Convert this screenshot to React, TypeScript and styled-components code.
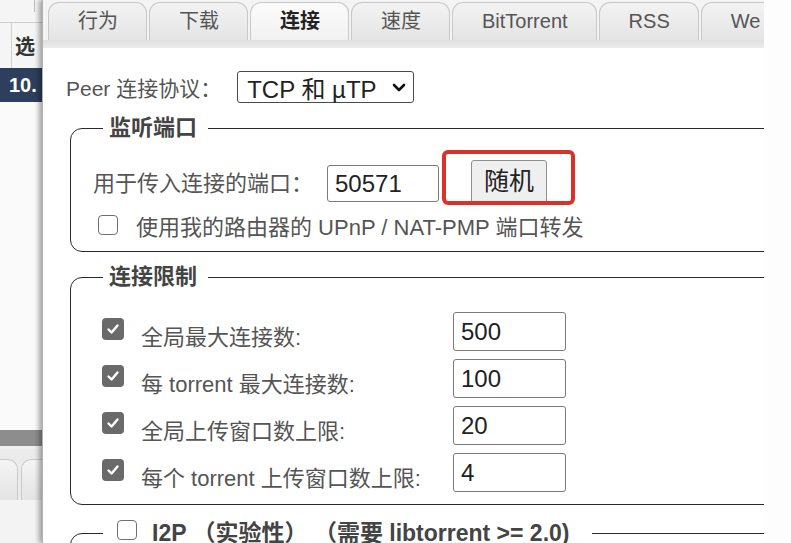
import React from 'react';
import styled, { createGlobalStyle } from 'styled-components';

const GlobalStyle = createGlobalStyle`
  html, body {
    margin: 0;
    padding: 0;
    background: #fdfdfd;
  }
  body {
    font-family: "Liberation Sans", "Noto Sans CJK SC", sans-serif;
  }
`;

const tabs = [
    { id: 'behavior', label: '行为' },
    { id: 'downloads', label: '下载' },
    { id: 'connection', label: '连接', active: true },
    { id: 'speed', label: '速度' },
    { id: 'bittorrent', label: 'BitTorrent' },
    { id: 'rss', label: 'RSS' },
    { id: 'webui', label: 'We' },
];

const limits = [
    { id: 1, label: '全局最大连接数:', value: '500' },
    { id: 2, label: '每 torrent 最大连接数:', value: '100' },
    { id: 3, label: '全局上传窗口数上限:', value: '20' },
    { id: 4, label: '每个 torrent 上传窗口数上限:', value: '4' },
];

const CheckMark = () => (
    <svg width="14" height="14" viewBox="0 0 14 14" fill="none">
        <polyline points="2.5 7.5 5.6 10.5 11.5 3.5" stroke="#fff" strokeWidth="2.4" strokeLinecap="round" strokeLinejoin="round" />
    </svg>
);

const Chevron = () => (
    <svg width="16" height="16" viewBox="0 0 16 16" fill="none">
        <polyline points="3 6 8 11 13 6" stroke="#111" strokeWidth="2.6" strokeLinecap="round" strokeLinejoin="round" />
    </svg>
);

export default function App() {
    return (
        <>
            <GlobalStyle />
            <Page>
                <LeftStrip>
                    <StripTop><Notch /></StripTop>
                    <StripHeader>
                        <HeaderSep />
                        <HeaderText>选</HeaderText>
                    </StripHeader>
                    <StripRow>10.</StripRow>
                    <StripFill />
                    <StripScroll />
                    <StripTabs>
                        <MiniTab $first />
                        <MiniTab />
                    </StripTabs>
                    <StripBottom />
                </LeftStrip>

                <Dialog>
                    <TabBar>
                        <TabRow>
                            {tabs.map((tab) => (
                                <Tab key={tab.id} $active={tab.active}>{tab.label}</Tab>
                            ))}
                        </TabRow>
                        <TabBase />
                    </TabBar>

                    <Content>
                        <PeerRow>
                            <FieldLabel $size={21}>Peer 连接协议：</FieldLabel>
                            <SelectBox>
                                <span>TCP 和 µTP</span>
                                <Chevron />
                            </SelectBox>
                        </PeerRow>

                        <Fieldset>
                            <Legend>监听端口</Legend>
                            <PortRow>
                                <FieldLabel $size={22}>用于传入连接的端口：</FieldLabel>
                                <PortInput defaultValue="50571" />
                                <Highlight>
                                    <RandomButton>随机</RandomButton>
                                </Highlight>
                            </PortRow>
                            <CheckRow>
                                <Box />
                                <FieldLabel $size={22}>使用我的路由器的 UPnP / NAT-PMP 端口转发</FieldLabel>
                            </CheckRow>
                        </Fieldset>

                        <Fieldset>
                            <Legend>连接限制</Legend>
                            <LimitGrid>
                                {limits.map((row) => (
                                    <React.Fragment key={row.id}>
                                        <CheckedBox><CheckMark /></CheckedBox>
                                        <LimitLabel>{row.label}</LimitLabel>
                                        <LimitInput defaultValue={row.value} />
                                    </React.Fragment>
                                ))}
                            </LimitGrid>
                        </Fieldset>

                        <Fieldset $gap={16}>
                            <Legend $withCheck>
                                <Box />
                                <span>I2P （实验性） （需要 libtorrent &gt;= 2.0)</span>
                            </Legend>
                        </Fieldset>
                    </Content>
                </Dialog>
                <RightGap />
            </Page>
        </>
    );
}

const Page = styled.div`
    display: flex;
    width: 791px;
    height: 543px;
    overflow: hidden;
`;

/* ---- background list behind the dialog ---- */

const LeftStrip = styled.div`
    width: 42px;
    flex-shrink: 0;
    display: flex;
    flex-direction: column;
    background: #f7f7f7;
    overflow: hidden;
`;

const StripTop = styled.div`
    height: 22px;
    border-bottom: 1px solid #cfcfcf;
    background: #f5f5f5;
`;

const Notch = styled.div`
    width: 1px;
    height: 12px;
    margin-left: 34px;
    background: #bdbdbd;
`;

const StripHeader = styled.div`
    height: 45px;
    display: flex;
    align-items: center;
    background: #f5f5f5;
`;

const HeaderSep = styled.div`
    width: 11px;
    height: 100%;
    flex-shrink: 0;
    border-right: 1px solid #d0d0d0;
`;

const HeaderText = styled.span`
    padding-left: 3px;
    font-size: 20px;
    font-weight: bold;
    color: #333;
    white-space: nowrap;
`;

const StripRow = styled.div`
    height: 34px;
    line-height: 34px;
    padding-left: 9px;
    background: #2d3f5d;
    color: #fff;
    font-size: 20px;
    font-weight: bold;
    white-space: nowrap;
`;

const StripFill = styled.div`
    flex: 1;
    background: #fafafa;
`;

const StripScroll = styled.div`
    height: 16px;
    background: #8d8d8d;
`;

const StripTabs = styled.div`
    height: 54px;
    display: flex;
    align-items: flex-end;
    gap: 3px;
    box-sizing: border-box;
    padding-top: 8px;
    border-top: 3px solid #f0f0f0;
    background: #ebebeb;
`;

const MiniTab = styled.div<{ $first?: boolean }>`
    flex-shrink: 0;
    width: ${(p) => (p.$first ? '18px' : '60px')};
    height: 40px;
    margin-left: ${(p) => (p.$first ? '-2px' : '0')};
    border: 1px solid #c9c9c9;
    border-bottom: 0;
    border-radius: ${(p) => (p.$first ? '0 10px 0 0' : '10px 0 0 0')};
    background: linear-gradient(#f4f4f4, #e4e4e4);
`;

const StripBottom = styled.div`
    height: 43px;
    background: #f3f3f3;
`;

/* ---- dialog ---- */

const Dialog = styled.div`
    width: 721px;
    flex-shrink: 0;
    display: flex;
    flex-direction: column;
    background: #fff;
    border-left: 1px solid #b0b0b0;
    box-shadow: -3px 0 5px rgba(0, 0, 0, 0.35);
    overflow: hidden;
`;

const TabBar = styled.div`
    height: 48px;
    flex-shrink: 0;
    display: flex;
    flex-direction: column;
    background: #f4f4f4;
`;

const TabRow = styled.div`
    display: flex;
    padding: 2px 0 0 5px;
    height: 40px;
    box-sizing: border-box;
`;

const Tab = styled.div<{ $active?: boolean }>`
    flex-shrink: 0;
    height: 38px;
    line-height: 36px;
    padding: 0 28px 0 29px;
    margin-right: 2px;
    border: 1px solid #c8c8c8;
    border-bottom: 0;
    border-radius: 11px 11px 0 0;
    background: ${(p) => (p.$active
        ? 'linear-gradient(#fbfbfb, #f1f1f1)'
        : 'linear-gradient(#f3f3f3, #e4e4e4)')};
    color: ${(p) => (p.$active ? '#222' : '#555')};
    font-size: 20px;
    font-weight: ${(p) => (p.$active ? 'bold' : 'normal')};
    white-space: nowrap;
`;

const TabBase = styled.div`
    height: 8px;
    background: linear-gradient(#e0e0e0, #ececec);
`;

const Content = styled.div`
    padding: 23px 0 0 23px;
    display: flex;
    flex-direction: column;
`;

const PeerRow = styled.div`
    display: flex;
    align-items: center;
    gap: 16px;
    height: 32px;
`;

const FieldLabel = styled.span<{ $size: number }>`
    font-size: ${(p) => p.$size}px;
    color: #555;
    white-space: nowrap;
`;

const SelectBox = styled.div`
    width: 177px;
    height: 32px;
    box-sizing: border-box;
    display: flex;
    align-items: center;
    justify-content: space-between;
    padding: 0 6px 0 9px;
    border: 1px solid #4a4a4a;
    border-radius: 3px;
    background: #fff;
    color: #222;
    font-size: 24px;
    white-space: nowrap;
`;

const Fieldset = styled.fieldset<{ $gap?: number }>`
    width: 760px;
    margin: ${(p) => p.$gap ?? 13}px 0 0 4px;
    padding: 10px 0 10px 22px;
    box-sizing: border-box;
    border: 1.5px solid #2a2a2a;
    border-radius: 12px;
    min-inline-size: 0;
`;

const Legend = styled.legend<{ $withCheck?: boolean }>`
    display: flex;
    align-items: center;
    gap: 15px;
    margin-left: 10px;
    padding: ${(p) => (p.$withCheck ? '0 22px 0 14px' : '0 11px 0 6px')};
    height: 24px;
    line-height: 24px;
    font-size: ${(p) => (p.$withCheck ? 23 : 22)}px;
    font-weight: bold;
    color: #444;
    white-space: nowrap;
`;

const PortRow = styled.div`
    display: flex;
    align-items: flex-end;
    height: 55px;

    & > span {
        line-height: 37px;
        margin-bottom: 3px;
    }
`;

const PortInput = styled.input`
    width: 112px;
    height: 37px;
    box-sizing: border-box;
    margin: 0 3px 3px 14px;
    padding: 0 7px;
    border: 1px solid #7a7a7a;
    border-radius: 3px;
    font-family: inherit;
    font-size: 24px;
    color: #222;
    outline: none;
`;

const Highlight = styled.div`
    position: relative;
    width: 133px;
    height: 55px;
    box-sizing: border-box;
    padding: 6px 0 0 25px;
    border: 4px solid #d8322a;
    border-radius: 6px;
    overflow: hidden;
`;

const RandomButton = styled.button`
    width: 76px;
    height: 46px;
    box-sizing: border-box;
    padding: 0;
    border: 1px solid #8f8f8f;
    border-radius: 3px;
    background: #efefef;
    font-family: inherit;
    font-size: 25px;
    line-height: 40px;
    color: #222;
    display: flex;
    justify-content: center;
    align-items: flex-start;
`;

const CheckRow = styled.div`
    display: flex;
    align-items: center;
    gap: 18px;
    margin-top: 10px;
    height: 26px;
    padding-left: 5px;

    & > span {
        line-height: 26px;
    }
`;

const Box = styled.span`
    display: inline-block;
    flex-shrink: 0;
    width: 20px;
    height: 20px;
    box-sizing: border-box;
    margin-bottom: 6px;
    border: 1.5px solid #707070;
    border-radius: 4px;
    background: #fff;
`;

const LimitGrid = styled.div`
    display: grid;
    grid-template-columns: 22px 295px 113px;
    grid-auto-rows: 39px;
    column-gap: 17px;
    row-gap: 8px;
    align-items: center;
    margin: 13px 0 2px 9px;
`;

const CheckedBox = styled.span`
    width: 22px;
    height: 22px;
    margin-bottom: 5px;
    border-radius: 4px;
    background: #6a6a6a;
    display: flex;
    align-items: center;
    justify-content: center;
`;

const LimitLabel = styled.span`
    font-size: 22px;
    color: #555;
    white-space: nowrap;
    padding-top: 6px;
`;

const LimitInput = styled.input`
    width: 113px;
    height: 39px;
    box-sizing: border-box;
    padding: 0 7px;
    border: 1px solid #7a7a7a;
    border-radius: 3px;
    font-family: inherit;
    font-size: 24px;
    color: #222;
    outline: none;
`;

const RightGap = styled.div`
    flex: 1;
    background: #fdfdfd;
`;
